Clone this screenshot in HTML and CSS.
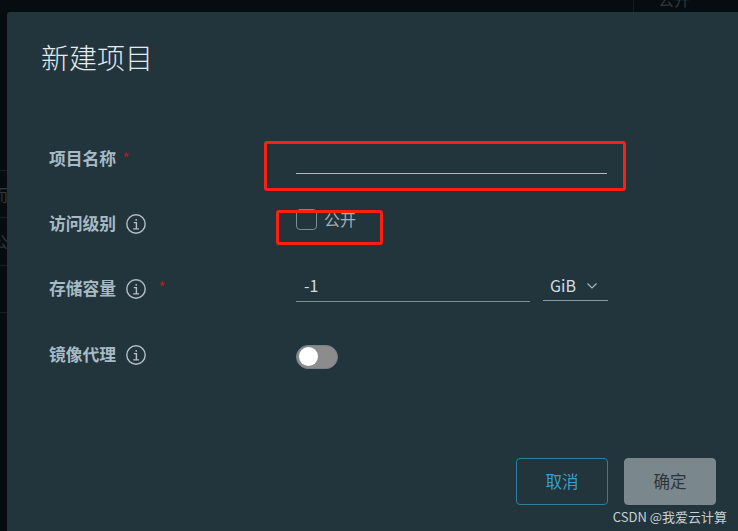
FILE: index.html
```html
<!DOCTYPE html>
<html lang="zh-CN">
<head>
    <meta charset="UTF-8">
    <meta name="viewport" content="width=device-width, initial-scale=1.0">
    <title>新建项目</title>
    <link rel="stylesheet" href="styles.css">
</head>
<body>
    <div class="page">
        <div class="backdrop">
            <span class="bg-line line-1"></span>
            <span class="bg-line line-2"></span>
            <span class="bg-line line-3"></span>
            <span class="bg-line line-4"></span>
            <span class="bg-divider"></span>
            <span class="bg-text bg-top">公开</span>
            <span class="bg-text bg-left-1">而</span>
            <span class="bg-text bg-left-2">公</span>
        </div>

        <div class="modal">
            <h1 class="modal-title">新建项目</h1>

            <form class="form">
                <div class="row">
                    <label class="label"><span class="label-text">项目名称</span><span class="star star-name">*</span></label>
                    <div class="control control-name">
                        <div class="text-input"></div>
                    </div>
                </div>

                <div class="row">
                    <label class="label"><span class="label-text">访问级别</span>
                        <svg class="info" viewBox="0 0 20 20"><circle cx="10" cy="10" r="9.2"/><path d="M7.8 8.6h2.6v6M7.2 14.9h5.8M10.2 5v1.7"/></svg>
                    </label>
                    <div class="control control-check">
                        <span class="checkbox"></span>
                        <span class="check-text">公开</span>
                    </div>
                </div>

                <div class="row">
                    <label class="label"><span class="label-text">存储容量</span>
                        <svg class="info" viewBox="0 0 20 20"><circle cx="10" cy="10" r="9.2"/><path d="M7.8 8.6h2.6v6M7.2 14.9h5.8M10.2 5v1.7"/></svg>
                        <span class="star star-size">*</span>
                    </label>
                    <div class="control control-size">
                        <div class="size-input">-1</div>
                        <div class="size-select">
                            <span>GiB</span>
                            <svg class="chevron" viewBox="0 0 10 6"><path d="M0.5 0.5L5 5L9.5 0.5"/></svg>
                        </div>
                    </div>
                </div>

                <div class="row row-last">
                    <label class="label"><span class="label-text">镜像代理</span>
                        <svg class="info" viewBox="0 0 20 20"><circle cx="10" cy="10" r="9.2"/><path d="M7.8 8.6h2.6v6M7.2 14.9h5.8M10.2 5v1.7"/></svg>
                    </label>
                    <div class="control">
                        <span class="toggle"><span class="knob"></span></span>
                    </div>
                </div>
            </form>

            <div class="footer">
                <button class="btn btn-cancel" type="button">取消</button>
                <button class="btn btn-ok" type="button">确定</button>
            </div>
        </div>

        <!-- red boxes drawn on top of the screenshot -->
        <div class="mark mark-name"></div>
        <div class="mark mark-check"></div>

        <div class="watermark">CSDN @我爱云计算</div>
    </div>
</body>
</html>
```

FILE: styles.css
```css
* {
    box-sizing: border-box;
}

body {
    margin: 0;
    font-family: "Noto Sans CJK SC", "Noto Sans", "Liberation Sans", sans-serif;
}

.page {
    position: relative;
    width: 738px;
    height: 531px;
    overflow: hidden;
    background: #060c10;
    display: flex;
    padding: 12px 0 0 7px;
}

/* page behind the dialog */
.bg-line {
    position: absolute;
    left: 0;
    width: 7px;
    height: 1px;
    background: #171f23;
}

.line-1 { top: 170px; }
.line-2 { top: 217px; }
.line-3 { top: 265px; }
.line-4 { top: 312px; }

.bg-divider {
    position: absolute;
    left: 633px;
    top: 0;
    width: 1px;
    height: 12px;
    background: #151c20;
}

.bg-text {
    position: absolute;
    font-size: 16px;
    line-height: 20px;
    color: #30393d;
}

.bg-top { left: 658px; top: -11px; }
.bg-left-1 { left: -8px; top: 184px; }
.bg-left-2 { left: -8px; top: 231px; }

.modal {
    position: relative;
    flex: 1;
    display: flex;
    flex-direction: column;
    background: #22343c;
    border-radius: 3px 0 0 0;
    padding: 0 22px 26px 34px;
}

.modal-title {
    margin: 25px 0 0;
    font-size: 28px;
    line-height: 40px;
    font-weight: 300;
    color: #e4eaed;
}

.form {
    margin-top: 49px;
    padding-left: 8px;
}

.row {
    display: flex;
    align-items: center;
    height: 65px;
}

.row-last {
    margin-top: 1px;
}

.label {
    width: 247px;
    display: flex;
    align-items: center;
    font-size: 16.8px;
    line-height: 24px;
    font-weight: 700;
    color: #a8bac4;
}

.label-text {
    margin-top: -2px;
}

.star {
    color: #a5241c;
    font-size: 16px;
    font-weight: 400;
    line-height: 14px;
}

.star-name {
    margin: -2px 0 0 6px;
}

.star-size {
    margin: -4px 0 0 12px;
}

.info {
    width: 20px;
    height: 20px;
    margin-left: 10px;
    fill: none;
    stroke: #b4c0c6;
    stroke-width: 1.4;
}

.control {
    display: flex;
    align-items: center;
    width: 312px;
}

.control-name {
    align-self: flex-start;
    padding-top: 47px;
}

.text-input {
    width: 311px;
    height: 1px;
    background: #b0bcc2;
}

.control-check {
    gap: 7px;
    margin-top: -8px;
}

.checkbox {
    width: 21px;
    height: 21px;
    border: 1px solid #7d8c93;
    border-radius: 4px;
}

.check-text {
    font-size: 16px;
    line-height: 20px;
    color: #a3b1b8;
    margin-top: -2px;
}

.control-size {
    gap: 13px;
    margin-top: -3px;
    align-items: flex-start;
}

.size-input {
    width: 234px;
    height: 30px;
    padding-left: 8px;
    font-size: 16px;
    line-height: 27px;
    color: #d6dde1;
    border-bottom: 1px solid #7f8e95;
}

.size-select {
    width: 65px;
    height: 29px;
    display: flex;
    align-items: center;
    gap: 11px;
    padding-left: 7px;
    padding-bottom: 1px;
    font-size: 16px;
    line-height: 27px;
    color: #d6dde1;
    border-bottom: 1px solid #8b989e;
}

.chevron {
    width: 10px;
    height: 6px;
    fill: none;
    stroke: #aab5bb;
    stroke-width: 1.2;
}

.toggle {
    display: flex;
    align-items: center;
    width: 42px;
    height: 24px;
    padding-left: 2px;
    margin-top: 4px;
    background: #8c8c8c;
    border: 1px solid #75828a;
    border-radius: 12px;
}

.knob {
    width: 19px;
    height: 19px;
    background: #fff;
    border-radius: 50%;
}

.footer {
    margin-top: auto;
    display: flex;
    justify-content: flex-end;
    gap: 16px;
}

.btn {
    width: 92px;
    height: 47px;
    padding: 0 0 2px;
    border-radius: 4px;
    font-family: inherit;
    font-size: 16.5px;
    cursor: pointer;
}

.btn-cancel {
    background: transparent;
    border: 1px solid #2f7f9f;
    color: #3a9dcc;
}

.btn-ok {
    background: #7a878d;
    border: 1px solid #7a878d;
    color: #2a353a;
}

.mark {
    position: absolute;
    border: 3px solid #fb2012;
    border-radius: 3px;
}

.mark-name {
    left: 264px;
    top: 141px;
    width: 362px;
    height: 50px;
}

.mark-check {
    left: 276px;
    top: 210px;
    width: 107px;
    height: 35px;
}

.watermark {
    position: absolute;
    right: 11px;
    top: 508px;
    font-size: 13px;
    line-height: 18px;
    color: #c8d0d4;
}
```
